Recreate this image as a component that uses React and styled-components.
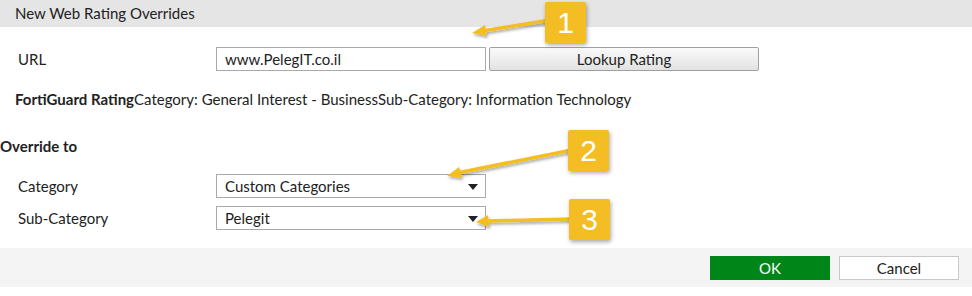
import styled, { createGlobalStyle } from "styled-components";

const Global = createGlobalStyle`
  html, body {
    margin: 0;
    padding: 0;
    background: #fff;
  }
  body {
    font-family: Lato, "Open Sans", sans-serif;
    font-size: 15px;
    color: #222;
  }
`;

const App = () => {
  return (
    <Page>
      <Global />
      <Header>New Web Rating Overrides</Header>
      <Row $top={20}>
        <Label>URL</Label>
        <Input>www.PelegIT.co.il</Input>
        <LookupButton>Lookup Rating</LookupButton>
      </Row>
      <Rating>
        <b>FortiGuard Rating</b>Category: General Interest - BusinessSub-Category: Information Technology
      </Rating>
      <Section>Override to</Section>
      <Row $top={18}>
        <Label>Category</Label>
        <Select>
          Custom Categories
          <Caret />
        </Select>
      </Row>
      <Row $top={8}>
        <Label>Sub-Category</Label>
        <Select>
          Pelegit
          <Caret />
        </Select>
      </Row>
      <Footer>
        <OkButton>OK</OkButton>
        <CancelButton>Cancel</CancelButton>
      </Footer>

      <Arrows width="972" height="296" viewBox="0 0 972 296">
        <defs>
          <filter id="sh" x="-20%" y="-50%" width="140%" height="200%">
            <feDropShadow dx="1" dy="2" stdDeviation="1.5" floodColor="#000" floodOpacity="0.35" />
          </filter>
        </defs>
        <g fill="#f4bd24" stroke="#f4bd24" filter="url(#sh)">
          <line x1="550" y1="20" x2="482" y2="31" strokeWidth="3.5" />
          <polygon points="472,33 485,25 487,36" stroke="none" />
          <line x1="572" y1="150" x2="457" y2="173" strokeWidth="3.5" />
          <polygon points="447,176 459,167 462,178" stroke="none" />
          <line x1="572" y1="219" x2="487" y2="221" strokeWidth="3.5" />
          <polygon points="476,222 488,215 489,227" stroke="none" />
        </g>
      </Arrows>
      <Callout $x={545} $y={2}>1</Callout>
      <Callout $x={568} $y={130}>2</Callout>
      <Callout $x={569} $y={199}>3</Callout>
    </Page>
  );
};

export default App;

const Page = styled.div`
  position: relative;
  width: 972px;
  height: 296px;
  overflow: hidden;
  display: flex;
  flex-direction: column;
`;

const Header = styled.div`
  height: 27px;
  line-height: 27px;
  background: #e5e5e5;
  padding-left: 15px;
  font-size: 15px;
  color: #222;
`;

const Row = styled.div`
  display: flex;
  align-items: center;
  margin-top: ${(p) => p.$top}px;
  padding-left: 18px;
  height: 24px;
`;

const Label = styled.div`
  width: 198px;
  font-size: 15px;
`;

const Field = styled.div`
  box-sizing: border-box;
  width: 270px;
  height: 24px;
  border: 1px solid #a9a9a9;
  background: #fff;
  padding-left: 8px;
  display: flex;
  align-items: center;
  font-size: 15px;
`;

const Input = styled(Field)``;

const Select = styled(Field)`
  position: relative;
`;

const Caret = styled.span`
  position: absolute;
  right: 7px;
  top: 9px;
  width: 0;
  height: 0;
  border-left: 5px solid transparent;
  border-right: 5px solid transparent;
  border-top: 6px solid #222;
`;

const LookupButton = styled.div`
  box-sizing: border-box;
  margin-left: 3px;
  width: 270px;
  height: 24px;
  border: 1px solid #a0a0a0;
  border-radius: 2px;
  background: linear-gradient(#fafafa, #e2e2e2);
  display: flex;
  align-items: center;
  justify-content: center;
  font-size: 15px;
`;

const Rating = styled.div`
  margin-top: 18px;
  padding-left: 15px;
  height: 20px;
  line-height: 20px;
  font-size: 15px;
  b {
    font-weight: 700;
  }
`;

const Section = styled.div`
  margin-top: 27px;
  height: 20px;
  line-height: 20px;
  font-weight: 700;
  font-size: 15px;
`;

const Footer = styled.div`
  margin-top: 18px;
  height: 39px;
  background: #f4f4f4;
  display: flex;
  align-items: center;
  justify-content: flex-end;
  gap: 9px;
  padding-right: 13px;
`;

const FooterButton = styled.div`
  box-sizing: border-box;
  width: 120px;
  height: 24px;
  display: flex;
  align-items: center;
  justify-content: center;
  font-size: 15px;
`;

const OkButton = styled(FooterButton)`
  background: #008618;
  color: #fff;
`;

const CancelButton = styled(FooterButton)`
  background: #fff;
  border: 1px solid #c8c8c8;
  color: #222;
`;

const Arrows = styled.svg`
  position: absolute;
  left: 0;
  top: 0;
  pointer-events: none;
`;

const Callout = styled.div`
  position: absolute;
  left: ${(p) => p.$x}px;
  top: ${(p) => p.$y}px;
  width: 41px;
  height: 41px;
  background: #f4bd24;
  border-radius: 2px;
  box-shadow: 1px 2px 4px rgba(0, 0, 0, 0.35);
  color: #fff;
  font-family: "Liberation Sans", Arial, sans-serif;
  font-size: 30px;
  display: flex;
  align-items: center;
  justify-content: center;
`;
